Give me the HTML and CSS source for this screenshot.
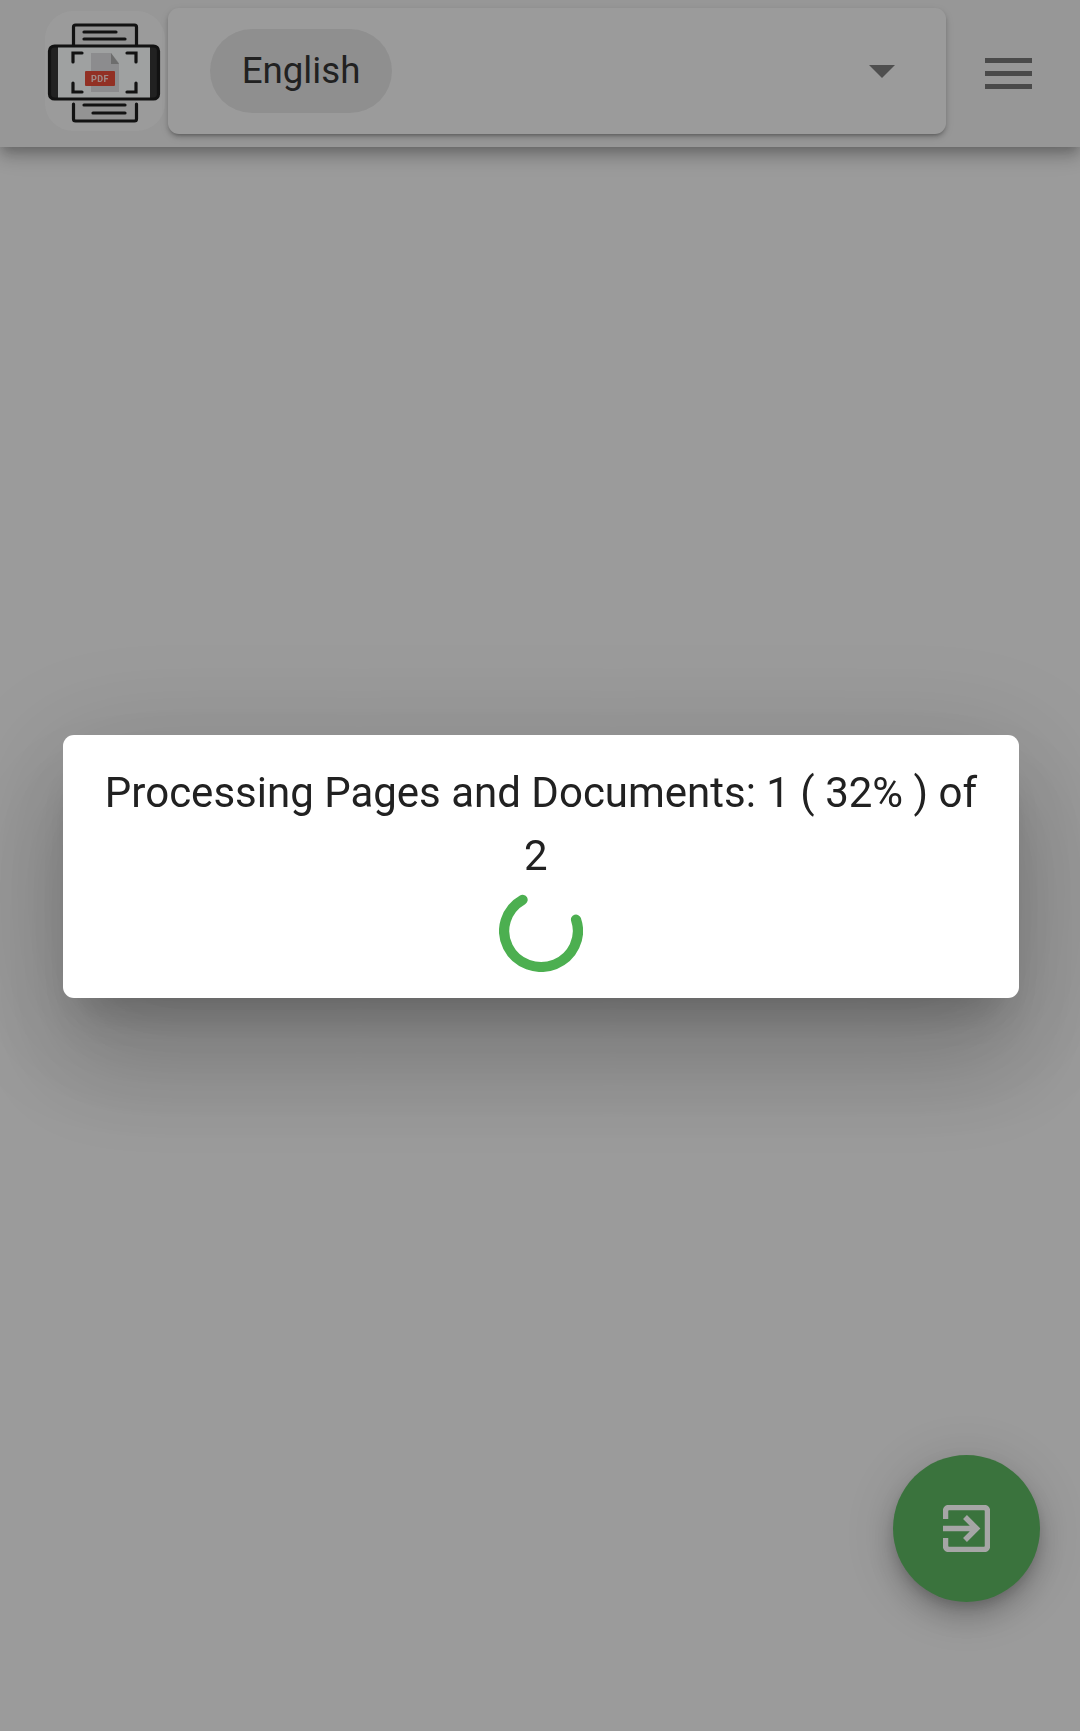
FILE: index.html
```html
<!DOCTYPE html>
<html lang="en">
<head>
  <meta charset="UTF-8">
  <meta name="viewport" content="width=device-width, initial-scale=1.0" />
  <title>Processing</title>
  <link rel="stylesheet" href="styles.css">
</head>
<body>
  <header class="topbar">
    <div class="logo">
      <svg width="120" height="120" viewBox="45 11 120 120">
        <!-- top page -->
        <path class="page-bg" d="M73 45V26h63v19z"/>
        <path class="ink" d="M73.500 45V27a2 2 0 0 1 2-2h59a2 2 0 0 1 2 2v18"/>
        <path class="ink" d="M84 32h32M84 39h41"/>
        <!-- phone -->
        <rect class="screen" x="50" y="46" width="108" height="53" rx="5"/>
        <path class="phone-end" d="M55 46h3v53h-3a5 5 0 0 1-5-5V51a5 5 0 0 1 5-5zM150 46h3a5 5 0 0 1 5 5v43a5 5 0 0 1-5 5h-3z"/>
        <rect class="ink" x="49.500" y="46" width="109" height="53" rx="5"/>
        <path class="ink" d="M82 53h-9v9M127 53h9v9M82 92h-9v-9M127 92h9v-9"/>
        <!-- document -->
        <path class="doc" d="M91 53h20l8 10v29H91z"/>
        <path class="doc-fold" d="M111 53l8 11h-8z"/>
        <rect class="badge" x="85" y="71" width="30" height="15" rx="1"/>
        <text class="badge-text" x="100" y="82">PDF</text>
        <!-- bottom page -->
        <path class="page-bg" d="M73 101v19h63v-19z"/>
        <path class="ink" d="M73.500 104v15a2 2 0 0 0 2 2h59a2 2 0 0 0 2-2v-15"/>
        <path class="ink" d="M84 105h41M93 113h32"/>
      </svg>
    </div>

    <div class="lang-card">
      <span class="lang-chip">English</span>
      <span class="lang-arrow"></span>
    </div>

    <div class="menu-btn">
      <span></span>
      <span></span>
      <span></span>
    </div>
  </header>

  <button class="fab">
    <svg width="47" height="47" viewBox="0 0 47 47">
      <path d="M2.500 14V6a3.500 3.500 0 0 1 3.500-3.500h35a3.500 3.500 0 0 1 3.500 3.500v35a3.500 3.500 0 0 1-3.500 3.500H6a3.500 3.500 0 0 1-3.500-3.500v-8"/>
      <path d="M0 23.500h32M22 12l11.500 11.500L22 35"/>
    </svg>
  </button>

  <div class="scrim">
    <div class="dialog">
      <p class="dialog-text">Processing Pages and Documents: 1 ( 32% ) of 2&nbsp;</p>
      <svg class="spinner" width="84" height="82" viewBox="0 0 82 82" preserveAspectRatio="none">
        <path d="M75.200 29.600A36 36 0 1 1 23 9.800"/>
      </svg>
    </div>
  </div>
</body>
</html>
```

FILE: styles.css
```css
* {
  box-sizing: border-box;
}

html, body {
  height: 100%;
}

body {
  margin: 0;
  background: #eeeeee;
  font-family: Roboto, "Liberation Sans", sans-serif;
  overflow: hidden;
}

.topbar {
  display: flex;
  align-items: flex-start;
  height: 147px;
  padding: 8px 0 0 45px;
  background: #e8e8e8;
  box-shadow: 0 5px 11px -3px rgba(0,0,0,.2), 0 11px 14px 0 rgba(0,0,0,.14), 0 3px 28px 0 rgba(0,0,0,.12);
}

.logo {
  width: 120px;
  height: 120px;
  margin-top: 3px;
  border-radius: 28px;
  background: #efefef;
  flex: none;
}

.logo svg {
  display: block;
  filter: blur(.3px);
}

.ink {
  fill: none;
  stroke: #1c1c1c;
  stroke-width: 3.200;
  stroke-linecap: round;
}

.page-bg {
  fill: #e2e2e2;
}

.screen {
  fill: #f4f8f8;
}

.phone-end {
  fill: #333333;
}

.doc {
  fill: #d8d8da;
}

.doc-fold {
  fill: #a8a8a8;
}

.badge {
  fill: #e04a38;
}

.badge-text {
  fill: #f5d5cf;
  font-size: 9px;
  font-weight: 700;
  letter-spacing: .5px;
  text-anchor: middle;
}

.lang-card {
  display: flex;
  align-items: center;
  justify-content: space-between;
  width: 778px;
  height: 126px;
  margin-left: 3px;
  padding: 0 51px 0 42px;
  border-radius: 11px;
  background: #efefef;
  box-shadow: 0 3px 3px -2px rgba(0,0,0,.2), 0 3px 4px 0 rgba(0,0,0,.14), 0 3px 8px 0 rgba(0,0,0,.12);
  flex: none;
}

.lang-chip {
  display: flex;
  align-items: center;
  justify-content: center;
  width: 182px;
  height: 84px;
  padding-bottom: 2px;
  border-radius: 42px;
  background: #dcdcdc;
  color: #333333;
  font-size: 36.700px;
}

.lang-arrow {
  width: 0;
  height: 0;
  border-left: 13px solid transparent;
  border-right: 13px solid transparent;
  border-top: 13px solid #7a7a7a;
}

.menu-btn {
  display: flex;
  flex-direction: column;
  gap: 8px;
  width: 47px;
  margin: 50px 0 0 39px;
  flex: none;
}

.menu-btn span {
  height: 5px;
  background: #727272;
}

.fab {
  position: fixed;
  right: 40px;
  bottom: 129px;
  display: flex;
  align-items: center;
  justify-content: center;
  width: 147px;
  height: 147px;
  padding: 0;
  border: none;
  border-radius: 50%;
  background: #5ab15e;
  box-shadow: 0 8px 14px -3px rgba(0,0,0,.2), 0 16px 28px 3px rgba(0,0,0,.14), 0 5px 50px 3px rgba(0,0,0,.12);
}

.fab svg {
  fill: none;
  stroke: #ffffff;
  stroke-width: 5.500;
}

.scrim {
  position: fixed;
  top: 0;
  left: 0;
  right: 0;
  bottom: 0;
  display: flex;
  align-items: center;
  justify-content: center;
  padding: 2px 0 0 2px;
  background: rgba(0,0,0,.35);
}

.dialog {
  display: flex;
  flex-direction: column;
  align-items: center;
  width: 956px;
  height: 263px;
  padding: 26px 22px 0;
  border-radius: 11px;
  background: #ffffff;
  box-shadow: 0 30px 41px -19px rgba(0,0,0,.2), 0 66px 105px 8px rgba(0,0,0,.14), 0 25px 127px 22px rgba(0,0,0,.12);
}

.dialog-text {
  margin: 0;
  color: #212121;
  font-size: 42px;
  line-height: 63px;
  text-align: center;
}

.spinner {
  display: block;
  margin-top: 3px;
  fill: none;
  stroke: #4caf50;
  stroke-width: 10;
  stroke-linecap: round;
}
```
